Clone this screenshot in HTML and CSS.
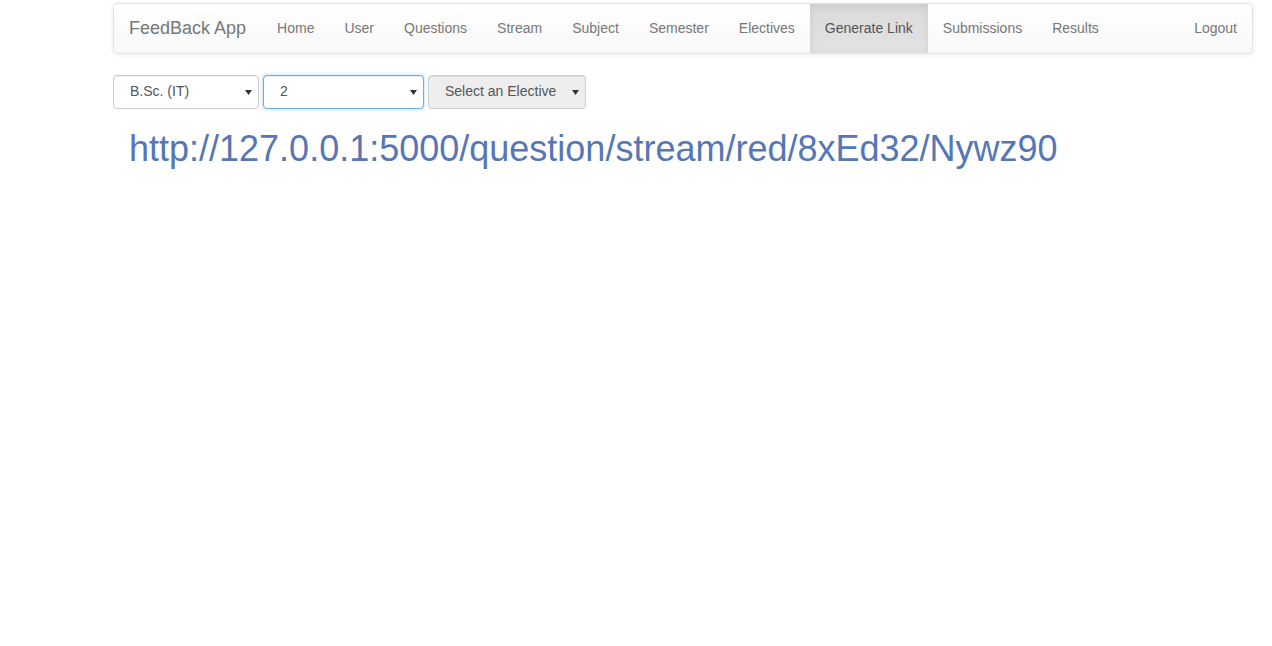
FILE: index.html
```html
<!DOCTYPE html>
<html>
<head>
<meta charset="utf-8">
<title>FeedBack App</title>
<link rel="stylesheet" href="styles.css">
</head>
<body>
<div class="container">
  <nav class="navbar">
    <a class="brand" href="#">FeedBack App</a>
    <ul class="nav">
      <li><a href="#">Home</a></li>
      <li><a href="#">User</a></li>
      <li><a href="#">Questions</a></li>
      <li><a href="#">Stream</a></li>
      <li><a href="#">Subject</a></li>
      <li><a href="#">Semester</a></li>
      <li><a href="#">Electives</a></li>
      <li class="active"><a href="#">Generate Link</a></li>
      <li><a href="#">Submissions</a></li>
      <li><a href="#">Results</a></li>
    </ul>
    <ul class="nav nav-right">
      <li><a href="#">Logout</a></li>
    </ul>
  </nav>

  <div class="selects">
    <div class="select sel-stream"><span>B.Sc. (IT)</span><svg class="caret" width="7" height="5" viewBox="0 0 7 5"><path d="M0 0H7L3.5 5Z" fill="#333"/></svg></div>
    <div class="select sel-sem focus"><span>2</span><svg class="caret" width="7" height="5" viewBox="0 0 7 5"><path d="M0 0H7L3.5 5Z" fill="#333"/></svg></div>
    <div class="select sel-elec disabled"><span>Select an Elective</span><svg class="caret" width="7" height="5" viewBox="0 0 7 5"><path d="M0 0H7L3.5 5Z" fill="#333"/></svg></div>
  </div>

  <h1 class="link">http://127.0.0.1:5000/question/stream/red/8xEd32/Nywz90</h1>
</div>
</body>
</html>
```
FILE: styles.css
```css
* { box-sizing: border-box; }
html, body { margin: 0; padding: 0; background: #fff; }
body {
  font-family: "Liberation Sans", Arial, Helvetica, sans-serif;
  font-size: 14px;
  line-height: 20px;
  color: #333;
}
.container {
  width: 1140px;
  margin-left: 113px;
  padding-top: 3px;
}
.navbar {
  display: flex;
  align-items: stretch;
  height: 51px;
  border: 1px solid #e3e3e3;
  border-radius: 4px;
  background: linear-gradient(to bottom, #ffffff 0%, #f8f8f8 100%);
  box-shadow: inset 0 1px 0 rgba(255,255,255,.15), 0 1px 5px rgba(0,0,0,.075);
}
.brand {
  display: block;
  padding: 14px 16px 15px 15px;
  font-size: 18px;
  line-height: 20px;
  color: #777;
  text-decoration: none;
}
.nav {
  display: flex;
  list-style: none;
  margin: 0;
  padding: 0;
}
.nav li { display: flex; }
.nav a {
  display: block;
  padding: 14px 15px 15px 15px;
  color: #777;
  text-decoration: none;
  font-size: 14px;
  line-height: 20px;
}
.nav li.active a {
  color: #555;
  background: linear-gradient(to bottom, #dbdbdb 0%, #e2e2e2 100%);
  box-shadow: inset 0 3px 9px rgba(0,0,0,.075);
}
.nav-right { margin-left: auto; }

.selects {
  display: flex;
  gap: 4px;
  margin-top: 21px;
}
.select {
  display: flex;
  align-items: center;
  justify-content: space-between;
  height: 34px;
  padding: 0 6px 2px 16px;
  border: 1px solid #ccc;
  border-radius: 4px;
  background: #fff;
  color: #555;
  font-size: 14px;
  box-shadow: inset 0 1px 1px rgba(0,0,0,.075);
}
.caret { display: block; margin-top: 2px; }
.sel-stream { width: 146px; }
.sel-sem { width: 161px; }
.sel-elec { width: 158px; }
.select.focus {
  border-color: #66afe9;
  box-shadow: inset 0 1px 1px rgba(0,0,0,.075), 0 0 4px rgba(102,175,233,.5);
}
.select.disabled {
  background: #eee;
}

.link {
  margin: 20px 0 0 0;
  padding-left: 16px;
  font-size: 36px;
  line-height: 40px;
  font-weight: normal;
  color: #5677b4;
}
```
